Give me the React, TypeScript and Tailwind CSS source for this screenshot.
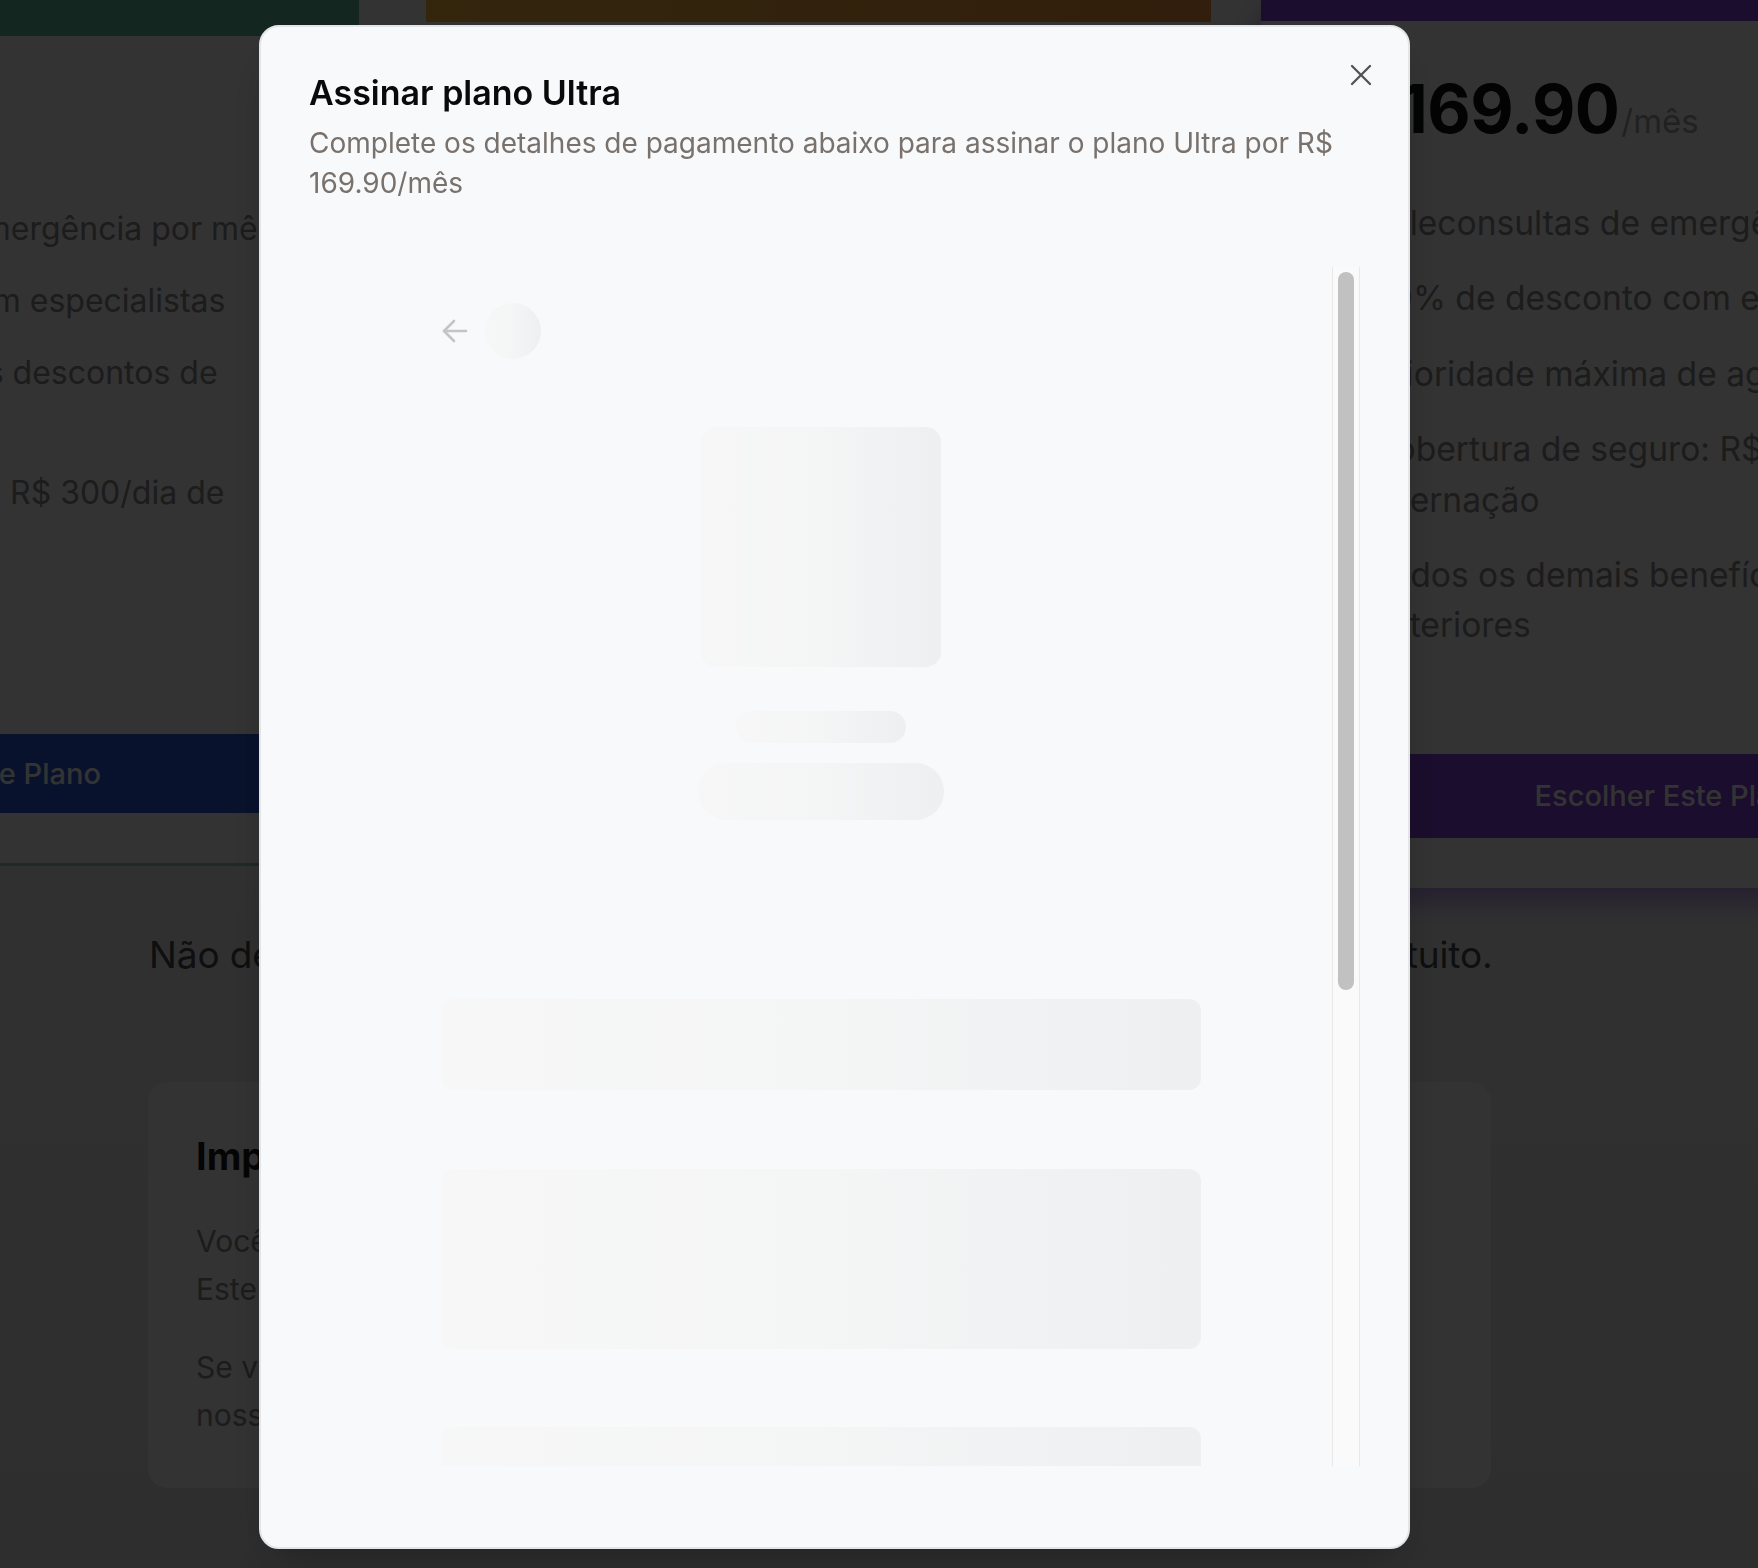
import React from "react";

function CloseIcon() {
  return (
    <svg width="24" height="24" viewBox="0 0 24 24" fill="none" stroke="#525252" strokeWidth="2.3" strokeLinecap="round">
      <line x1="3" y1="3" x2="21" y2="21" />
      <line x1="21" y1="3" x2="3" y2="21" />
    </svg>
  );
}

function ArrowLeftIcon() {
  return (
    <svg width="26" height="24" viewBox="0 0 26 24" fill="none" stroke="#c4c4c6" strokeWidth="2.6" strokeLinecap="round" strokeLinejoin="round">
      <line x1="2" y1="12" x2="24" y2="12" />
      <polyline points="12,2 2,12 12,22" />
    </svg>
  );
}

const skel = "bg-linear-to-r from-[#f7f7f7] via-[#f4f5f5] to-[#eeeff1]";

function Modal() {
  return (
    <div
      role="dialog"
      className="fixed left-[259px] top-[25px] w-[1151px] h-[1524px] rounded-[20px] border-2 border-[#e3e5e8] bg-[#f8f9fb] shadow-2xl flex flex-col pl-[48px] pr-[48px] pt-[42px]"
    >
      <button className="absolute right-[35px] top-[36px] w-[24px] h-[24px] flex items-center justify-center">
        <CloseIcon />
      </button>
      <h2 className="text-[34px] leading-[48px] font-semibold text-[#0a0a0a]">
        Assinar plano Ultra
      </h2>
      <p className="mt-[6px] text-[28px] leading-[40px] text-[#78716c] pr-[10px]">
        Complete os detalhes de pagamento abaixo para assinar o plano Ultra por R$ 169.90/mês
      </p>
      <div className="mt-[64px] h-[1199px] flex overflow-hidden">
        <div className="flex-1 overflow-hidden">
          <div className="w-[760px] mx-auto pt-[36px] flex flex-col">
            <div className="flex items-center h-[56px]">
              <div className="ml-[1px] w-[26px] flex items-center">
                <ArrowLeftIcon />
              </div>
              <div className={`ml-[17px] w-[56px] h-[56px] rounded-full ${skel}`} />
            </div>
            <div className={`mt-[68px] self-center w-[240px] h-[240px] rounded-[15px] ${skel}`} />
            <div className={`mt-[44px] self-center w-[170px] h-[32px] rounded-full ${skel}`} />
            <div className={`mt-[20px] self-center w-[246px] h-[57px] rounded-full ${skel}`} />
            <div className={`mt-[179px] w-full h-[91px] rounded-[12px] ${skel}`} />
            <div className={`mt-[79px] w-full h-[180px] rounded-[12px] ${skel}`} />
            <div className={`mt-[78px] w-full h-[120px] rounded-[12px] ${skel}`} />
          </div>
        </div>
        <div className="w-[28px] h-full border-l border-r border-[#e8e8e8] bg-[#fafafa] pt-[5px] flex justify-center">
          <div className="w-[16px] h-[718px] rounded-full bg-[#c1c1c1]" />
        </div>
      </div>
    </div>
  );
}

function LeftCard() {
  return (
    <div className="w-[789px] h-[866px] shrink-0 bg-white border-b-[3px] border-[#8fd6b4] flex flex-col">
      <div className="h-[36px] bg-[#64bea0]" />
      <ul className="mt-[169px] pl-[108px] flex flex-col gap-[24px] text-[32px] leading-[48px] text-[#8a8a8a] whitespace-nowrap">
        <li>3 teleconsultas de emergência por mês</li>
        <li>20% de desconto com especialistas</li>
        <li>
          Óticas com bem mais descontos de
          <br />
          parceiros
        </li>
        <li>
          Cobertura de seguro: R$ 300/dia de
          <br />
          internação
        </li>
      </ul>
      <div className="mt-[169px] mx-[40px] h-[79px] bg-[#2a5bdc] flex items-center justify-center text-[29px] font-medium text-white">
        Escolher Este Plano
      </div>
    </div>
  );
}

function MiddleCard() {
  return (
    <div className="ml-[67px] w-[785px] h-[880px] shrink-0 bg-white flex flex-col">
      <div className="h-[22px] bg-linear-to-r from-[#fdbe44] to-[#f5963c]" />
      <div className="mt-[54px] pl-[110px] text-[66px] font-bold text-[#111]">R$ 99.90</div>
    </div>
  );
}

function RightCard() {
  return (
    <div className="ml-[50px] w-[820px] h-[888px] shrink-0 bg-white flex flex-col shadow-[0_12px_28px_rgba(120,70,220,0.55)]">
      <div className="h-[21px] bg-[#8544e0]" />
      <div className="mt-[55px] pl-[86px] flex items-baseline h-[66px] leading-[66px]">
        <span className="text-[30px] font-semibold text-[#111827] mr-[13px]">R$</span>
        <span className="text-[67px] font-bold text-[#0f1014] tracking-[-0.01em]">169.90</span>
        <span className="ml-[2px] text-[33px] text-[#a3a3a8]">/mês</span>
      </div>
      <ul className="mt-[56px] pl-[110px] flex flex-col gap-[25px] text-[33.6px] leading-[50.4px] text-[#8a8a8a] whitespace-nowrap">
        <li>Teleconsultas de emergência ilimitadas</li>
        <li>30% de desconto com especialistas</li>
        <li>Prioridade máxima de agendamento</li>
        <li>
          Cobertura de seguro: R$ 500/dia de
          <br />
          internação
        </li>
        <li>
          Todos os demais benefícios dos planos
          <br />
          anteriores
        </li>
      </ul>
      <div className="mt-[103px] mx-[40px] h-[84px] bg-[#8544e0] flex items-center justify-center text-[29px] font-medium text-white">
        Escolher Este Plano
      </div>
    </div>
  );
}

export default function App() {
  return (
    <div className="relative w-full h-[1568px] overflow-hidden bg-linear-to-b from-[#ffffff] to-[#e6e6e6] font-['Inter',sans-serif]">
      <div className="flex items-start ml-[-430px]">
        <LeftCard />
        <MiddleCard />
        <RightCard />
      </div>
      <p className="mt-[39px] ml-[149px] w-[1342px] text-center whitespace-nowrap text-[37px] leading-[55px] tracking-[-0.12px] text-[#4b4b4b]">
        Não deseja assinar agora? Você pode continuar usando nosso plano gratuito.
      </p>
      <div className="mt-[100px] ml-[148px] w-[1343px] h-[406px] rounded-[20px] bg-white pl-[48px] pt-[50px]">
        <h3 className="text-[38px] leading-[49px] font-bold text-[#1a1a1a]">Importante</h3>
        <p className="mt-[36px] text-[30px] leading-[48px] text-[#8a8a8a] whitespace-nowrap">
          Você pode cancelar sua assinatura a qualquer momento nas configurações.
          <br />
          Este valor será cobrado mensalmente no cartão informado.
        </p>
        <p className="mt-[30px] text-[30px] leading-[48px] text-[#8a8a8a] whitespace-nowrap">
          Se você tiver alguma dúvida sobre os planos, entre em contato com
          <br />
          nossa equipe de suporte.
        </p>
      </div>
      <div className="fixed inset-0 bg-black/80" />
      <Modal />
    </div>
  );
}
